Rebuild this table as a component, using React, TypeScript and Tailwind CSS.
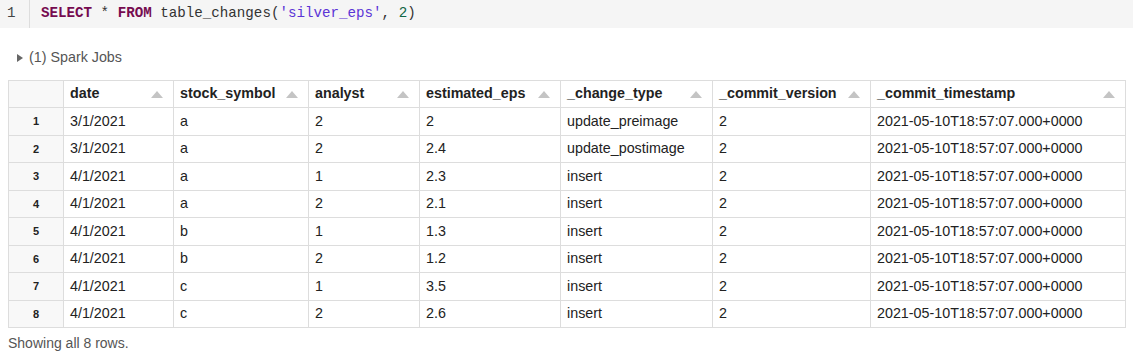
import React from "react";

const columns = [
  { name: "date", w: "w-[110px]" },
  { name: "stock_symbol", w: "w-[135px]" },
  { name: "analyst", w: "w-[111px]" },
  { name: "estimated_eps", w: "w-[141px]" },
  { name: "_change_type", w: "w-[152px]" },
  { name: "_commit_version", w: "w-[158px]" },
  { name: "_commit_timestamp", w: "w-[255px]" },
];

const ts = "2021-05-10T18:57:07.000+0000";

const rows = [
  ["3/1/2021", "a", "2", "2", "update_preimage", "2", ts],
  ["3/1/2021", "a", "2", "2.4", "update_postimage", "2", ts],
  ["4/1/2021", "a", "1", "2.3", "insert", "2", ts],
  ["4/1/2021", "a", "2", "2.1", "insert", "2", ts],
  ["4/1/2021", "b", "1", "1.3", "insert", "2", ts],
  ["4/1/2021", "b", "2", "1.2", "insert", "2", ts],
  ["4/1/2021", "c", "1", "3.5", "insert", "2", ts],
  ["4/1/2021", "c", "2", "2.6", "insert", "2", ts],
];

const SortArrow = () => (
  <svg width="12" height="7" viewBox="0 0 12 7" className="shrink-0">
    <path d="M6 0 L12 7 L0 7 Z" fill="#c4c4c4" />
  </svg>
);

export default function App() {
  return (
    <div className="w-[1133px] h-[354px] bg-white font-['Liberation_Sans',Arial,sans-serif] text-[#333]">
      {/* code cell */}
      <div className="flex h-[28px] items-center bg-[#f5f5f5] font-['Liberation_Mono',monospace] text-[14.2px]">
        <div className="flex h-full w-[30px] items-center border-r border-[#dddddd] pl-[7px] text-[#444]">
          1
        </div>
        <div className="pl-[11px] whitespace-pre text-[#333]">
          <span className="font-bold text-[#760b50]">SELECT</span>
          <span> * </span>
          <span className="font-bold text-[#760b50]">FROM</span>
          <span> table_changes(</span>
          <span className="text-[#5b34d6]">'silver_eps'</span>
          <span>, </span>
          <span className="text-[#116644]">2</span>
          <span>)</span>
        </div>
      </div>

      {/* spark jobs */}
      <div className="flex h-[20px] items-center gap-[6px] pl-[17px] mt-[20px] text-[14.3px] text-[#555]">
        <svg width="6" height="8" viewBox="0 0 6 8">
          <path d="M0 0 L6 4 L0 8 Z" fill="#666" />
        </svg>
        <span>(1) Spark Jobs</span>
      </div>

      {/* table */}
      <div className="ml-[8px] mt-[12px]">
        <table className="border-collapse text-[14.3px] text-[#222]">
          <thead>
            <tr className="h-[27px]">
              <th className="w-[55px] border border-[#dddddd] bg-[#f8f8f8]" />
              {columns.map((c) => (
                <th
                  key={c.name}
                  className={`${c.w} border border-[#dddddd] px-[6px] text-left font-bold`}
                >
                  <div className="flex items-center justify-between pr-[4px]">
                    <span>{c.name}</span>
                    <SortArrow />
                  </div>
                </th>
              ))}
            </tr>
          </thead>
          <tbody>
            {rows.map((r, i) => (
              <tr key={i} className="h-[27.5px]">
                <td className="border border-[#dddddd] bg-[#f8f8f8] text-center text-[11px] font-bold">
                  {i + 1}
                </td>
                {r.map((v, j) => (
                  <td key={j} className="border border-[#dddddd] px-[6px]">
                    {v}
                  </td>
                ))}
              </tr>
            ))}
          </tbody>
        </table>
        <div className="mt-[5px] text-[14px] text-[#555]">Showing all 8 rows.</div>
      </div>
    </div>
  );
}
